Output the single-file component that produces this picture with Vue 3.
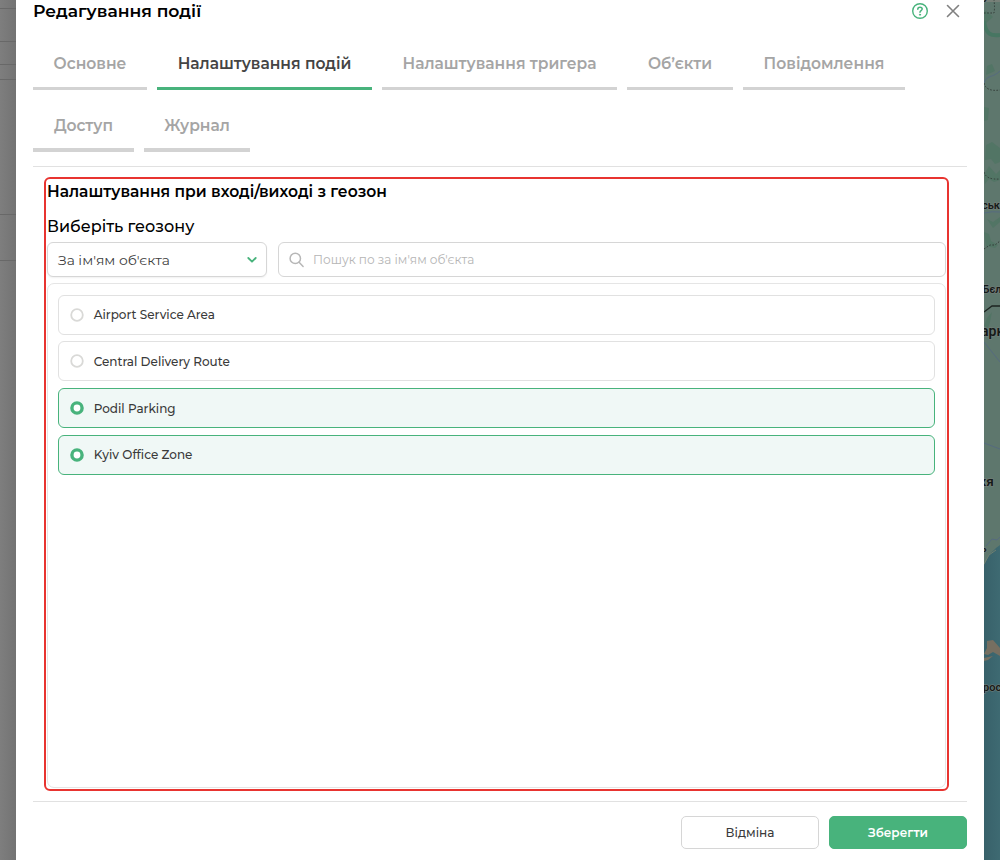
<script setup>
import { ref } from 'vue'

const tabs = [
  { label: 'Основне', width: 114 },
  { label: 'Налаштування подій', width: 215 },
  { label: 'Налаштування тригера', width: 235 },
  { label: 'Об’єкти', width: 106 },
  { label: 'Повідомлення', width: 162 },
  { label: 'Доступ', width: 101, second: true },
  { label: 'Журнал', width: 106, second: true }
]
const activeTab = ref(1)

const zones = ref([
  { name: 'Airport Service Area', selected: false },
  { name: 'Central Delivery Route', selected: false },
  { name: 'Podil Parking', selected: true },
  { name: 'Kyiv Office Zone', selected: true }
])
</script>

<template>
  <div class="screen">
    <div class="side">
      <i class="l1"></i><i class="l2"></i><i class="l3"></i><i class="l4"></i><i class="l5"></i><i class="l6"></i>
    </div>

    <main class="dialog">
      <header class="head">
        <h1>Редагування події</h1>
        <div class="tools">
          <svg class="help" width="18" height="18" viewBox="0 0 18 18" fill="none" stroke="#48b37c" stroke-width="1.4" stroke-linecap="round">
            <circle cx="9" cy="9" r="7.3" />
            <path d="M6.8 7.3C6.8 5.9 7.7 5.2 9 5.2s2.2.8 2.2 1.9C11.2 8.6 9 8.7 9 10.2" stroke-width="1.5" />
            <circle cx="9" cy="12.7" r=".6" fill="#48b37c" stroke-width=".9" />
          </svg>
          <svg class="close" width="14" height="14" viewBox="0 0 14 14" fill="none" stroke="#808080" stroke-width="1.6" stroke-linecap="round">
            <path d="M1.5 1.5l11 11M12.5 1.5l-11 11" />
          </svg>
        </div>
      </header>

      <nav class="tabs">
        <button
          v-for="(tab, i) in tabs"
          :key="tab.label"
          class="tab"
          :class="{ active: i === activeTab, second: tab.second }"
          :style="{ width: tab.width + 'px' }"
          @click="activeTab = i"
        >{{ tab.label }}</button>
      </nav>

      <section class="panel">
        <h2>Налаштування при вході/виході з геозон</h2>
        <h3>Виберіть геозону</h3>
        <div class="filters">
          <div class="select">
            <span>За ім'ям об'єкта</span>
            <svg width="10" height="6" viewBox="0 0 10 6" fill="none" stroke="#48b37c" stroke-width="1.8" stroke-linecap="round" stroke-linejoin="round">
              <path d="M1.3 1l3.7 3.7L8.7 1" />
            </svg>
          </div>
          <div class="search">
            <svg width="16" height="16" viewBox="0 0 16 16" fill="none" stroke="#b7b7b7" stroke-width="1.5" stroke-linecap="round">
              <circle cx="6.3" cy="6.4" r="5.2" />
              <path d="M10.1 10.3l4 4.2" />
            </svg>
            <span>Пошук по за ім'ям об'єкта</span>
          </div>
        </div>
        <div class="list">
          <div
            v-for="zone in zones"
            :key="zone.name"
            class="zone"
            :class="{ selected: zone.selected }"
            @click="zone.selected = !zone.selected"
          >
            <svg class="radio" width="14" height="14" viewBox="0 0 14 14">
              <circle v-if="zone.selected" cx="7" cy="7" r="5.1" fill="#fff" stroke="#48b37c" stroke-width="3.4" />
              <circle v-else cx="7" cy="7" r="5.8" fill="#fff" stroke="#d9d9d7" stroke-width="1.8" />
            </svg>
            <span>{{ zone.name }}</span>
          </div>
        </div>
      </section>

      <footer class="foot">
        <button class="btn">Відміна</button>
        <button class="btn primary">Зберегти</button>
      </footer>
    </main>

    <svg class="map" width="16" height="860" viewBox="0 0 16 860">
      <defs>
        <linearGradient id="sea" x1="0" y1="0" x2="1" y2="0">
          <stop offset="0" stop-color="#38616a" />
          <stop offset="1" stop-color="#3e6a72" />
        </linearGradient>
      </defs>
      <rect width="16" height="860" fill="#5e776d" />
      <rect width="16" height="2" fill="#778078" />
      <g fill="#527565">
        <path d="M0 10l5 3 4 4-7 6-2-2zM3 66l5-2 3 7-9 4zM0 107l5 1-1 12-4 1zM2 145l6-3 8 6v14l-5 2-4-5-6 1zM0 175l5-9 7 8 4-4v10l-6 2-5-3-4 5zM3 219l6 3 7-5v5l-7 6zM0 232l5 2 2 7 7 4-3 3-9-2zM3 318l5-6-2 10-2 6-4-2z" />
      </g>
      <path d="M0 21c2 14 7 15 16 14" fill="none" stroke="#477662" stroke-width="4" />
      <g fill="none" stroke="#333c38" stroke-width="1" stroke-dasharray="1.6 1.6">
        <path d="M0 13h10q1-5 0-13M0 83q2 9 16 7M0 172q2 8 16 7M0 249l6-4h5l5-4" />
      </g>
      <g fill="none" stroke="#566b7f" stroke-width="1">
        <path d="M0 83c2-8 9-5 16-12M0 213q8-2 16-1M0 342l16 20M0 443l16 6M2 546l6-7 5 1 3-3" />
      </g>
      <path d="M0 312l8-6h8" fill="none" stroke="#1d2421" stroke-width="1.3" />
      <path d="M0 573v-8l5-10 7-7 4-3v315H0z" fill="url(#sea)" />
      <path d="M0 564l5-9 7-5" fill="none" stroke="#6f7f70" />
      <path d="M3 641l6-1 7 8v8l-7-4-5 3-4-1 3-6zM0 658l9-2-5 4-4 1z" fill="#766f61" />
      <g class="labels">
        <text x="-1" y="0" font-size="11">у</text>
        <text x="-2" y="208.5" font-size="11">ськ</text>
        <text x="-1.5" y="293" font-size="11">Бєл</text>
        <text x="-3" y="336" font-size="14">арк</text>
        <text x="-9" y="486" font-size="13.5">жя</text>
        <text x="-3" y="552" font-size="10">ь</text>
        <text x="-1" y="691" font-size="11">рос</text>
      </g>
    </svg>
  </div>
</template>

<style>
body {
  overflow: hidden;
}
</style>

<style scoped>
* {
  box-sizing: border-box;
}
.screen {
  display: flex;
  width: 1000px;
  height: 860px;
  overflow: hidden;
  background: #fff;
  font-family: Montserrat, Inter, "Noto Sans", sans-serif;
}
.side {
  flex: 0 0 16px;
  background: linear-gradient(90deg, #7e7e7e, #737373);
}
.side i {
  display: block;
  height: 1px;
  background: #686868;
}
.side .l1 { margin-top: 8px; }
.side .l2 { margin-top: 32px; }
.side .l3 { margin-top: 22px; }
.side .l4 { margin-top: 14px; }
.side .l5 { margin-top: 134px; }
.side .l6 { margin-top: 45px; }
.dialog {
  flex: 0 0 968px;
  height: 860px;
  padding: 0 17px;
  background: #fff;
}
.head {
  display: flex;
  justify-content: space-between;
  height: 28px;
}
h1, h2, h3 {
  margin: 0;
  color: #000;
  white-space: nowrap;
}
h1 {
  font-size: 17.2px;
  font-weight: 600;
  line-height: 22px;
}
.tools {
  display: flex;
  gap: 17px;
  padding: 1.5px 6.6px 0 0;
}
.close {
  margin-top: 2.8px;
}
.tabs {
  display: flex;
  flex-wrap: wrap;
  align-content: flex-start;
  column-gap: 10px;
  height: 139px;
  padding-top: 8px;
  border-bottom: 1px solid #e1e1e1;
}
.tab {
  height: 54px;
  padding: 5px 0 0;
  border: 0;
  border-bottom: 3px solid #d3d3d3;
  background: none;
  color: #a5a5a5;
  font: 600 15.5px/20px Montserrat, Inter, "Noto Sans", sans-serif;
  white-space: nowrap;
}
.tab.second {
  height: 62px;
  padding: 14px 0 0;
  border-bottom-width: 4px;
}
.tab.active {
  border-color: #48b37c;
  color: #444;
}
.panel {
  display: flex;
  flex-direction: column;
  width: 905px;
  height: 614px;
  margin: 10px 0 0 11px;
  padding: 0 1px 1px;
  border: 2px solid #e83430;
  border-radius: 6px;
}
h2 {
  margin-top: 2px;
  font-size: 15.54px;
  font-weight: 600;
  line-height: 22px;
}
h3 {
  margin-top: 13px;
  font-size: 16px;
  font-weight: 500;
  line-height: 22px;
}
.filters {
  display: flex;
  gap: 11px;
  margin-top: 4px;
}
.select, .search {
  display: flex;
  align-items: center;
  height: 35px;
  border: 1px solid #d6d6d6;
  border-radius: 6px;
  background: #fff;
  white-space: nowrap;
}
.select {
  justify-content: space-between;
  width: 220px;
  padding: 0 9.5px 0 10px;
  color: #404040;
  font-size: 13.9px;
  box-shadow: 0 1px 2px rgba(0, 0, 0, 0.06);
}
.search {
  flex: 1;
  gap: 8px;
  padding-left: 10px;
  color: #b5b5b5;
  font-size: 12.1px;
}
.list {
  display: flex;
  flex: 1;
  flex-direction: column;
  gap: 6.67px;
  margin-top: 6px;
  padding: 10.8px 10px;
  border: 1px solid #e5e5e5;
  border-radius: 7px;
}
.zone {
  display: flex;
  align-items: center;
  flex: 0 0 40px;
  gap: 10.2px;
  padding-left: 10.5px;
  border: 1px solid #e1e1e1;
  border-radius: 6px;
  color: #3a3a3a;
  font-size: 12px;
  font-weight: 500;
}
.radio {
  flex: 0 0 14px;
}
.selected {
  border-color: #48b37c;
  background: #f0f8f6;
}
.foot {
  display: flex;
  justify-content: flex-end;
  gap: 10px;
  margin-top: 10px;
  padding-top: 14px;
  border-top: 1px solid #e1e1e1;
}
.btn {
  width: 138px;
  height: 33px;
  padding: 0;
  border: 1px solid #d6d6d6;
  border-radius: 5px;
  background: #fff;
  color: #3a3a3a;
  font: 500 12.1px/18px Montserrat, Inter, "Noto Sans", sans-serif;
}
.btn.primary {
  border-color: #48b37c;
  background: #48b37c;
  color: #fff;
  font-weight: 600;
  font-size: 12px;
}
.map {
  flex: 0 0 16px;
  display: block;
}
.labels {
  fill: #151a18;
  stroke: #777f7a;
  stroke-width: 1.2px;
  paint-order: stroke;
  font-family: Roboto, sans-serif;
  font-weight: 600;
}
</style>
